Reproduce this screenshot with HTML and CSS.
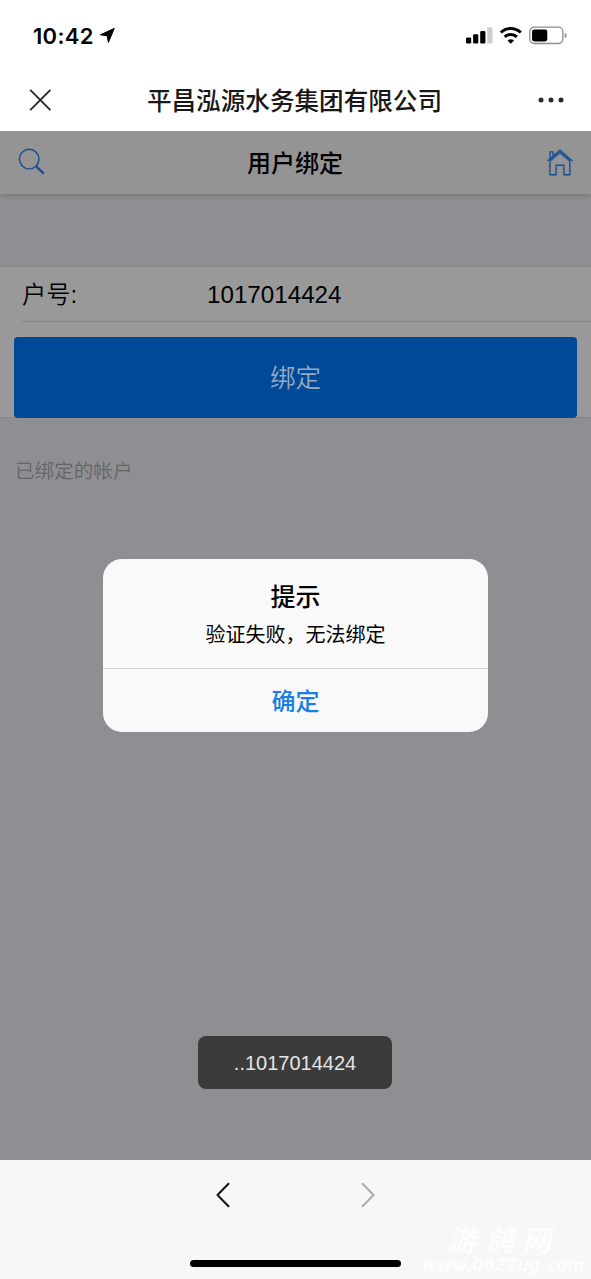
FILE: index.html
```html
<!DOCTYPE html>
<html lang="zh-CN">
<head>
<meta charset="utf-8">
<meta name="viewport" content="width=device-width, initial-scale=1">
<title>用户绑定</title>
<link rel="stylesheet" href="styles.css">
</head>
<body>
<div class="screen">
  <div class="status">
    <span class="time">10:42</span>
    <svg class="location" width="15" height="15" viewBox="0 0 15 15"><path d="M.4 6.8 14.3.4 8.4 14.4 7.2 7.8Z" stroke="#000" stroke-width="1" stroke-linejoin="round"/></svg>
    <svg class="indicators" width="102" height="18" viewBox="0 0 102 18">
      <rect x="0" y="10.5" width="5.2" height="6" rx="1.3"/>
      <rect x="7.1" y="7.3" width="5.2" height="9.2" rx="1.3"/>
      <rect x="14.2" y="4" width="5.2" height="12.5" rx="1.3"/>
      <rect x="21.3" y="0.3" width="5.2" height="16.2" rx="1.3" fill="#cdcdcd"/>
      <g fill="none" stroke="#000" stroke-width="3"><path d="M34.8 5.5a14.2 14.2 0 0 1 20 0"/><path d="M38.7 9.9a8.8 8.8 0 0 1 12.2 0"/></g>
      <path d="M44.8 16.8 41.5 13.6a5 5 0 0 1 6.6 0Z"/>
      <rect x="63.8" y=".2" width="33" height="16.3" rx="4.4" fill="none" stroke="#8c8c8c" stroke-width="1.3"/>
      <rect x="66" y="2.4" width="15.3" height="12" rx="2.3"/>
      <path d="M98.6 5.7c2.8.6 2.8 4.7 0 5.3Z" fill="#999"/>
    </svg>
  </div>
  <div class="titlebar">
    <svg class="close" width="22" height="22" viewBox="0 0 22 22"><path d="M1.7 1.4 20.9 20.6M20.9 1.4 1.7 20.6"/></svg>
    <h1 class="company">平昌泓源水务集团有限公司</h1>
    <svg class="more" width="26" height="6" viewBox="0 0 26 6"><circle cx="3" cy="3" r="2.5"/><circle cx="13" cy="3" r="2.5"/><circle cx="23" cy="3" r="2.5"/></svg>
  </div>
  <main class="page">
    <header class="pagehead">
      <svg class="icon" width="28" height="28" viewBox="0 0 28 28"><circle cx="11.2" cy="11.1" r="9.8"/><path d="m18.2 18.3 7.6 7.4" stroke-width="2.4"/></svg>
      <h2 class="pagetitle">用户绑定</h2>
      <svg class="icon" width="28" height="28" viewBox="0 0 28 28"><path d="M1.4 13 14 2.2 26.5 13M3.9 12.8V26.7h6.2v-9.4h7.8v9.4h6V12.8M3.9 12.9 14 4.6l9.9 8.3M4.1 10.4V3.9h3v3.8"/></svg>
    </header>
    <section class="form">
      <div class="field"><span class="label">户号:</span><span class="value">1017014424</span></div>
      <div class="bind">绑定</div>
    </section>
    <p class="bound">已绑定的帐户</p>
    <div class="dialog">
      <div class="message"><h3 class="tip">提示</h3><p class="reason">验证失败，无法绑定</p></div>
      <div class="confirm">确定</div>
    </div>
    <div class="toast">..1017014424</div>
  </main>
  <footer class="toolbar">
    <div class="nav">
      <svg class="arrow" width="14" height="26" viewBox="0 0 14 26"><path d="M12.5 1.8 1.5 13l11 11.2"/></svg>
      <svg class="arrow next" width="14" height="26" viewBox="0 0 14 26"><path d="M1.5 1.8 12.5 13l-11 11.2"/></svg>
    </div>
    <div class="home"></div>
    <div class="watermark"><span class="site">游鸽网</span><span class="url">www.0827ug.com</span></div>
  </footer>
</div>
</body>
</html>
```
FILE: styles.css
```css
* { box-sizing: border-box; }
body, h1, h2, h3, p { margin: 0; }
body { background: #fff; color: #000; font-family: "Liberation Sans", "Noto Sans CJK SC", sans-serif; }
svg { display: block; flex: none; }
.screen { position: relative; display: flex; flex-direction: column; width: 591px; height: 1279px; overflow: hidden; }
.status { display: flex; align-items: center; height: 71px; padding: 0 23px 0 33px; }
.time { width: 61px; font: 600 22px/26px Inter, sans-serif; letter-spacing: .3px; white-space: nowrap; }
.location { margin-left: 6px; }
.indicators { margin-left: auto; overflow: visible; }
.titlebar { display: flex; align-items: center; justify-content: space-between; height: 60px; padding: 0 27px 2px 29px; }
.close { fill: none; stroke: #292929; stroke-width: 1.9; stroke-linecap: round; }
.company { padding-top: 3px; font-size: 24.6px; line-height: 36px; font-weight: 500; color: #181818; white-space: nowrap; }
.more { fill: #292929; }
.page { display: flex; flex-direction: column; height: 1029px; background: #8f8f93; overflow: hidden; }
.pagehead { display: flex; align-items: center; justify-content: space-between; height: 63px; padding: 0 18px 2px; background: #949494; box-shadow: 0 1px 6px rgba(0,0,0,.2); }
.icon { fill: none; stroke: #174f94; stroke-width: 1.4; }
.icon:last-child { margin-right: -1px; }
.pagetitle { padding: 5px 2px 0 0; font-size: 24px; line-height: 36px; font-weight: 500; }
.form { height: 152px; margin-top: 72px; border-top: 1px solid #858588; border-bottom: 1px solid #858588; background: #999; }
.field { display: flex; align-items: center; height: 55px; margin-left: 22px; border-bottom: 1px solid #858588; font-size: 24.2px; }
.label { width: 185px; padding-bottom: 3px; font-weight: 350; }
.value { padding-top: 1px; }
.bind { height: 81px; margin: 15px 14px 0; padding-top: 1px; border-radius: 4px; background: #004999; color: #99a9bd; font-size: 25.5px; line-height: 81px; font-weight: 350; text-align: center; }
.bound { margin: 38px 15px 0; color: #656569; font-size: 19.6px; line-height: 30px; font-weight: 350; }
.dialog { position: absolute; left: 103px; top: 559px; width: 385px; height: 173px; border-radius: 19px; overflow: hidden; background: #f9f9f9; text-align: center; }
.message { height: 110px; padding-top: 20px; border-bottom: 1px solid #d5d5d5; }
.tip { font-size: 25px; line-height: 37px; font-weight: 500; }
.reason { margin-top: 4px; font-size: 20px; line-height: 30px; }
.confirm { padding-top: 1px; color: #187ee5; font-size: 24px; line-height: 63px; font-weight: 500; }
.toast { position: absolute; left: 198px; top: 1036px; width: 194px; height: 53px; border-radius: 8px; background: #3b3b3b; color: #e5e5e5; font-size: 20px; line-height: 55px; text-align: center; }
.toolbar { position: relative; height: 119px; background: #f7f7f7; }
.nav { display: flex; justify-content: center; gap: 131px; padding: 22px 0 0; }
.arrow { fill: none; stroke: #111; stroke-width: 2; stroke-linecap: round; stroke-linejoin: round; }
.next { stroke: #acacac; }
.home { width: 211px; height: 7px; margin: 52px auto 0; border-radius: 4px; background: #000; }
.watermark { position: absolute; left: 422px; top: 63px; color: #fdfdfd; font-style: italic; font-weight: 700; white-space: nowrap; }
.site { display: block; padding-left: 26px; font-size: 29px; line-height: 36px; letter-spacing: 8px; }
.url { display: block; font: italic 700 16.8px/20px "DejaVu Sans", sans-serif; letter-spacing: -.4px; margin-top: -4px; }
```
